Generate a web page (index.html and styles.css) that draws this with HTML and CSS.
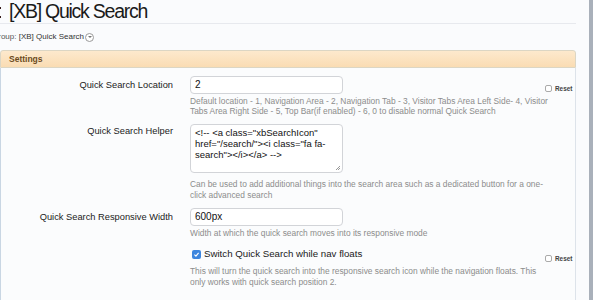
FILE: index.html
```html
<!DOCTYPE html>
<html>
<head>
<meta charset="utf-8">
<link rel="stylesheet" href="styles.css">
</head>
<body>
<div class="page">
  <div class="main">
    <h1 class="title"><span class="cut">:</span>[XB] Quick Search</h1>
    <div class="group"><span class="group-label">Group:</span> [XB] Quick Search<span class="drop"></span></div>
    <div class="section">
      <div class="section-head">Settings</div>
      <div class="section-body">
        <div class="row">
          <div class="label">Quick Search Location</div>
          <div class="control">
            <div class="input">2</div>
            <div class="desc">Default location - 1, Navigation Area - 2, Navigation Tab - 3, Visitor Tabs Area Left Side- 4, Visitor Tabs Area Right Side - 5, Top Bar(if enabled) - 6, 0 to disable normal Quick Search</div>
          </div>
          <div class="reset"><span class="box"></span>Reset</div>
        </div>
        <div class="row">
          <div class="label area-label">Quick Search Helper</div>
          <div class="control">
            <div class="textarea">&lt;!-- &lt;a class="xbSearchIcon"<br>href="/search/"&gt;&lt;i class="fa fa-<br>search"&gt;&lt;/i&gt;&lt;/a&gt; --&gt;<span class="grip"></span></div>
            <div class="desc after-area">Can be used to add additional things into the search area such as a dedicated button for a one-click advanced search</div>
          </div>
          <div class="reset empty"></div>
        </div>
        <div class="row">
          <div class="label">Quick Search Responsive Width</div>
          <div class="control">
            <div class="input">600px</div>
            <div class="desc">Width at which the quick search moves into its responsive mode</div>
          </div>
          <div class="reset empty"></div>
        </div>
        <div class="row">
          <div class="label"></div>
          <div class="control">
            <div class="check"><span class="checked"><svg viewBox="0 0 10 10" width="7" height="7"><path d="M2 5.2 L4.2 7.3 L8 2.8" fill="none" stroke="#fff" stroke-width="1.6"/></svg></span>Switch Quick Search while nav floats</div>
            <div class="desc after-check">This will turn the quick search into the responsive search icon while the navigation floats. This only works with quick search position 2.</div>
          </div>
          <div class="reset"><span class="box"></span>Reset</div>
        </div>
      </div>
    </div>
  </div>
  <div class="scroll"></div>
</div>
</body>
</html>
```

FILE: styles.css
```css
html, body {
  margin: 0;
  padding: 0;
}
body {
  background: #fafbfd;
  font-family: "Liberation Sans", Arial, sans-serif;
  color: #222;
  width: 593px;
  height: 300px;
  overflow: hidden;
}
.page {
  display: flex;
  height: 300px;
}
.main {
  width: 576px;
  display: flex;
  flex-direction: column;
}
.scroll {
  margin-left: 13px;
  width: 4px;
  background: #a9b0ba;
}
.title {
  margin: 0;
  height: 24px;
  box-sizing: border-box;
  font-weight: normal;
  font-size: 19.5px;
  letter-spacing: -1.25px;
  line-height: 22px;
  color: #1a1a1a;
  border-bottom: 1px solid #e7e9ee;
  white-space: nowrap;
  overflow: hidden;
}
.cut {
  display: inline-block;
  width: 3px;
  margin-left: -2px;
  margin-right: 8px;
  overflow: hidden;
  vertical-align: top;
}
.group {
  margin-top: 7px;
  height: 12px;
  font-size: 8px;
  line-height: 12px;
  color: #333;
  display: flex;
  align-items: center;
  white-space: pre;
}
.group-label {
  margin-left: -8px;
  color: #555;
}
.drop {
  margin-left: 1px;
  width: 9px;
  height: 9px;
  border: 1px solid #9a9a9a;
  border-radius: 50%;
  box-sizing: border-box;
  position: relative;
  background: #fff;
}
.drop::after {
  content: "";
  position: absolute;
  left: 1.5px;
  top: 2.5px;
  border-left: 2px solid transparent;
  border-right: 2px solid transparent;
  border-top: 2.5px solid #777;
}
.section {
  margin-top: 7px;
  flex: 1;
  display: flex;
  flex-direction: column;
}
.section-head {
  height: 18px;
  box-sizing: border-box;
  border: 1px solid #dcd6c4;
  border-radius: 3px 3px 0 0;
  background: linear-gradient(#fde9cd, #fadcb3);
  color: #6b4b1d;
  font-weight: bold;
  font-size: 8.5px;
  line-height: 16px;
  padding-left: 8px;
}
.section-body {
  flex: 1;
  border-left: 1px solid #c9d6e3;
  border-right: 1px solid #dde3ea;
  background: #fbfcfd;
  padding-top: 8px;
}
.row {
  display: grid;
  grid-template-columns: 172px 372px auto;
  margin-bottom: 8px;
}
.label {
  text-align: right;
  font-size: 9.3px;
  line-height: 18px;
  color: #222;
  white-space: nowrap;
}
.label.area-label {
  line-height: 14px;
}
.control {
  padding-left: 17px;
  display: flex;
  flex-direction: column;
  min-width: 0;
}
.input {
  width: 153px;
  height: 18px;
  box-sizing: border-box;
  border: 1px solid #d2d4d8;
  border-radius: 4px;
  background: #fff;
  font-size: 10px;
  line-height: 16px;
  padding-left: 4px;
  color: #111;
}
.textarea {
  width: 153px;
  height: 49px;
  box-sizing: border-box;
  border: 1px solid #d2d4d8;
  border-radius: 4px;
  background: #fff;
  font-size: 9.5px;
  line-height: 11px;
  padding: 2px 4px;
  color: #111;
  position: relative;
}
.grip {
  position: absolute;
  right: 2px;
  bottom: 2px;
  width: 4px;
  height: 4px;
  background: linear-gradient(135deg, transparent 45%, #999 45%, #999 55%, transparent 55%, transparent 75%, #999 75%, #999 85%, transparent 85%);
}
.desc {
  margin-top: 2px;
  margin-right: -6px;
  font-size: 8.4px;
  line-height: 10.2px;
  color: #8c8c8c;
}
.desc.after-area {
  margin-top: 6px;
}
.desc.after-check {
  margin-top: 4px;
  line-height: 10.8px;
}
.check {
  display: flex;
  align-items: center;
  font-size: 9.7px;
  line-height: 16px;
  color: #1a1a1a;
  padding-left: 2px;
}
.checked {
  width: 9px;
  height: 9px;
  border-radius: 2px;
  background: #3d86de;
  margin-right: 3px;
  display: flex;
  align-items: center;
  justify-content: center;
}
.reset {
  display: flex;
  align-items: center;
  align-self: start;
  margin-top: 9px;
  font-size: 6.4px;
  font-weight: bold;
  color: #444;
  white-space: nowrap;
}
.box {
  width: 7px;
  height: 7px;
  box-sizing: border-box;
  border: 1px solid #aaa;
  border-radius: 2px;
  background: #fff;
  margin-right: 3px;
}
```
